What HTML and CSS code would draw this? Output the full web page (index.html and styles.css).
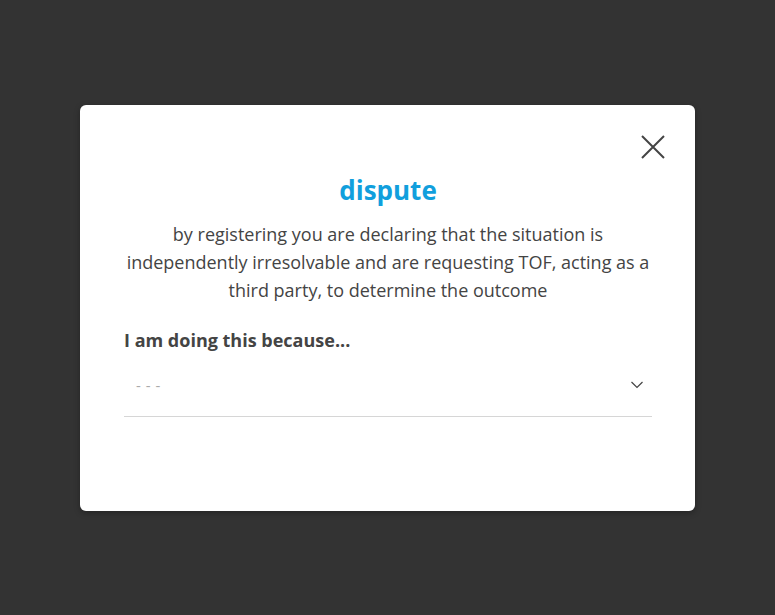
FILE: index.html
```html
<!DOCTYPE html>
<html>
<head>
<meta charset="utf-8">
<link rel="stylesheet" href="styles.css">
</head>
<body>
<div class="overlay">
  <div class="modal">
    <button class="close" aria-label="close">
      <svg width="24" height="24" viewBox="0 0 24 24"><path d="M1 1L23 23M23 1L1 23" stroke="#444" stroke-width="2" fill="none"/></svg>
    </button>
    <h1 class="title">dispute</h1>
    <p class="desc">by registering you are declaring that the situation is independently irresolvable and are requesting TOF, acting as a third party, to determine the outcome</p>
    <div class="field">
      <label class="label">I am doing this because...</label>
      <div class="select">
        <span class="placeholder">- - -</span>
        <svg class="chev" width="12" height="8" viewBox="0 0 12 8"><path d="M0.5 1L6 6.5L11.5 1" stroke="#444" stroke-width="1.2" fill="none"/></svg>
      </div>
    </div>
  </div>
</div>
</body>
</html>
```
FILE: styles.css
```css
html, body { margin: 0; padding: 0; }
body {
  background: #333333;
  font-family: "Open Sans", "Liberation Sans", sans-serif;
  width: 775px;
  height: 615px;
  overflow: hidden;
}
.overlay {
  padding-top: 105px;
  padding-left: 80px;
}
.modal {
  position: relative;
  box-sizing: border-box;
  width: 615px;
  height: 406px;
  background: #fff;
  border-radius: 6px;
  box-shadow: 0 2px 6px rgba(0,0,0,0.3);
  padding: 69px 43px 0 44px;
}
.close {
  position: absolute;
  right: 30px;
  top: 30px;
  background: none;
  border: 0;
  padding: 0;
  width: 24px;
  height: 24px;
  cursor: pointer;
}
.close svg { display: block; }
.title {
  margin: 0;
  text-align: center;
  color: #119fdd;
  font-size: 26px;
  font-weight: 700;
  line-height: 32px;
}
.desc {
  margin: 14px 0 0;
  text-align: center;
  color: #444;
  font-size: 18px;
  line-height: 28px;
}
.field { margin-top: 23px; }
.label {
  display: block;
  color: #444;
  font-size: 18px;
  font-weight: 700;
  line-height: 26px;
}
.select {
  display: flex;
  align-items: center;
  justify-content: space-between;
  height: 63px;
  border-bottom: 1px solid #d6d6d6;
  padding: 0 9px 0 12px;
}
.placeholder {
  color: #aaa;
  font-size: 15px;
  letter-spacing: 0.5px;
}
.chev { display: block; }
```
